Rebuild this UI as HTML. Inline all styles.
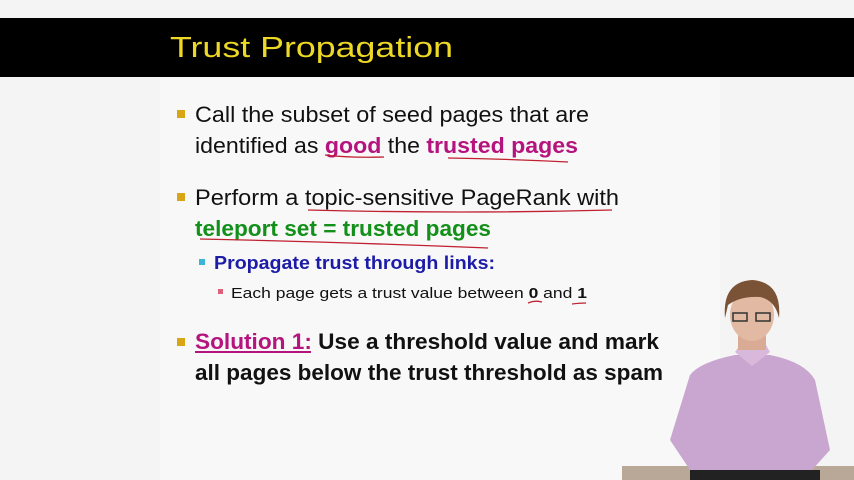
<!DOCTYPE html>
<html><head><meta charset="utf-8"><style>
html,body{margin:0;padding:0;background:#f4f4f4;width:854px;height:480px;overflow:hidden}
</style></head><body>
<svg width="854" height="480" xmlns="http://www.w3.org/2000/svg" style="display:block">
<rect width="854" height="480" fill="#f4f4f4"/>
<rect x="160" y="77" width="560" height="403" fill="#f8f8f8"/>
<rect x="0" y="18" width="854" height="59" fill="#000"/>
<g font-family="Liberation Sans, sans-serif">
<text x="170" y="57" font-size="29" fill="#ecd825" textLength="283" lengthAdjust="spacingAndGlyphs">Trust Propagation</text>
<rect x="177" y="110" width="8" height="8" fill="#d9a514"/>
<rect x="177" y="193" width="8" height="8" fill="#d9a514"/>
<rect x="177" y="338" width="8" height="8" fill="#d9a514"/>
<rect x="199" y="259" width="6" height="6" fill="#3cb4d8"/>
<rect x="218" y="289" width="5" height="5" fill="#e0607a"/>
<text x="195" y="122" font-size="22" fill="#111" textLength="394" lengthAdjust="spacingAndGlyphs">Call the subset of seed pages that are</text>
<text x="195" y="153" font-size="22" fill="#111" textLength="383" lengthAdjust="spacingAndGlyphs">identified as <tspan font-weight="bold" fill="#b5147e">good</tspan> the <tspan font-weight="bold" fill="#b5147e">trusted pages</tspan></text>
<text x="195" y="205" font-size="22" fill="#111" textLength="424" lengthAdjust="spacingAndGlyphs">Perform a topic-sensitive PageRank with</text>
<text x="195" y="236" font-size="22" font-weight="bold" fill="#12901a" textLength="296" lengthAdjust="spacingAndGlyphs">teleport set = trusted pages</text>
<text x="214" y="269" font-size="18" font-weight="bold" fill="#1c1ca8" textLength="281" lengthAdjust="spacingAndGlyphs">Propagate trust through links:</text>
<text x="231" y="298" font-size="15" fill="#111" textLength="356" lengthAdjust="spacingAndGlyphs">Each page gets a trust value between <tspan font-weight="bold">0</tspan> and <tspan font-weight="bold">1</tspan></text>
<text x="195" y="349" font-size="22" font-weight="bold" fill="#111" textLength="464" lengthAdjust="spacingAndGlyphs"><tspan fill="#b5147e">Solution 1:</tspan> Use a threshold value and mark</text>
<text x="195" y="380" font-size="22" font-weight="bold" fill="#111" textLength="468" lengthAdjust="spacingAndGlyphs">all pages below the trust threshold as spam</text>
<line x1="195" y1="352" x2="311" y2="352" stroke="#b5147e" stroke-width="2"/>
</g>
<g fill="none" stroke="#c02030" stroke-width="1.3">
<path d="M325 155 Q350 158 384 157"/>
<path d="M448 158 Q510 159 568 162"/>
<path d="M308 210 Q460 214 612 210"/>
<path d="M200 239 Q340 242 488 248"/>
<path d="M528 303 Q535 300 542 302"/>
<path d="M572 304 Q580 303 586 303"/>
</g>
<rect x="622" y="466" width="232" height="14" fill="#b9a898"/>
<path d="M690 375 Q700 362 735 355 L770 355 Q805 362 815 380 L830 450 L812 470 L690 470 L670 440 Z" fill="#c9a6cf"/>
<path d="M735 352 L752 366 L770 352 L766 345 L740 345 Z" fill="#d8b9dc"/>
<rect x="738" y="325" width="28" height="25" fill="#d9ab94"/>
<ellipse cx="752" cy="315" rx="22" ry="26" fill="#e2b9a2"/>
<path d="M725 318 Q722 282 752 280 Q782 282 779 318 Q775 300 760 297 Q740 296 728 305 Z" fill="#7a5236"/>
<rect x="733" y="313" width="14" height="8" fill="none" stroke="#333" stroke-width="1.5"/>
<rect x="756" y="313" width="14" height="8" fill="none" stroke="#333" stroke-width="1.5"/>
<rect x="690" y="470" width="130" height="10" fill="#222"/>
</svg>
</body></html>
